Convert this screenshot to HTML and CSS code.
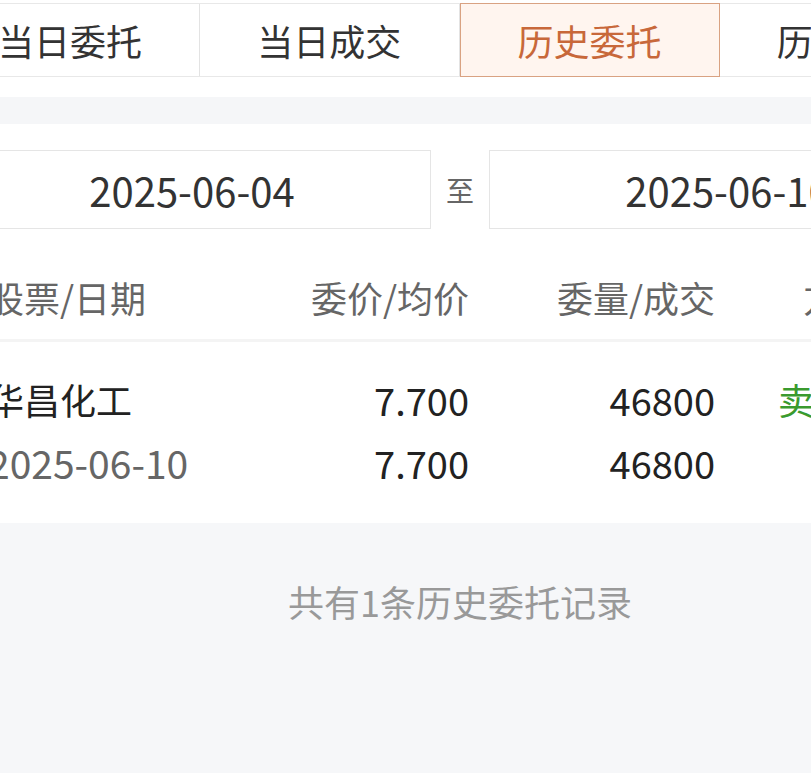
FILE: index.html
```html
<html>
<head>
    <meta charset="utf-8">
    <link rel="stylesheet" href="styles.css">
</head>

<body>
    <div class="page">
        <!-- Tabs -->
        <div class="tabs">
            <div class="tab">当日委托</div>
            <div class="tab">当日成交</div>
            <div class="tab active">历史委托</div>
            <div class="tab">历史成交</div>
        </div>

        <div class="gap"></div>

        <!-- Date range -->
        <div class="dates">
            <div class="date-box">2025-06-04</div>
            <div class="date-sep">至</div>
            <div class="date-box">2025-06-10</div>
        </div>

        <!-- Orders table -->
        <div class="table">
            <div class="row head">
                <div class="cell c1">股票/日期</div>
                <div class="cell c2">委价/均价</div>
                <div class="cell c3">委量/成交</div>
                <div class="cell c4 head-c4">方向/状态</div>
            </div>
            <div class="row item">
                <div class="cell c1">
                    <div class="name">华昌化工</div>
                    <div class="sub">2025-06-10</div>
                </div>
                <div class="cell c2 num">
                    <div>7.700</div>
                    <div>7.700</div>
                </div>
                <div class="cell c3 num">
                    <div>46800</div>
                    <div>46800</div>
                </div>
                <div class="cell c4">
                    <div class="sell">卖出</div>
                </div>
            </div>
        </div>

        <div class="footer">共有1条历史委托记录</div>
    </div>
</body>
</html>
```

FILE: styles.css
```css
html, body {
    margin: 0;
    padding: 0;
    background-color: #f6f7f9;
    overflow: hidden;
}

body {
    font-family: "Noto Sans CJK SC", "Noto Sans", sans-serif;
    color: #333;
}

.page {
    width: 1038px;
    margin-left: -59px;
    background-color: #fff;
    padding-top: 3px;
}

.tabs {
    display: flex;
    border-top: 1px solid #e8e8e8;
    border-bottom: 1px solid #e8e8e8;
    background-color: #fff;
}

.tab {
    flex: 1;
    height: 72px;
    display: flex;
    align-items: center;
    justify-content: center;
    font-size: 36px;
    color: #333;
    border-right: 1px solid #e3e3e3;
}

.tab.active {
    margin: -1px 0;
    height: 72px;
    border: 1px solid #d9a282;
    background-color: #fff5ef;
    color: #c8683a;
}

.gap {
    height: 27px;
    margin-top: 20px;
    background-color: #f5f6f8;
}

.dates {
    display: flex;
    align-items: center;
    padding: 26px 12px 0;
}

.date-box {
    flex: 1;
    height: 77px;
    border: 1px solid #e5e5e5;
    display: flex;
    align-items: center;
    justify-content: center;
    font-size: 40px;
    color: #333;
}

.date-sep {
    width: 58px;
    text-align: center;
    font-size: 28px;
    color: #666;
}

.table {
    padding: 0 0 0 47px;
}

.row {
    display: grid;
    grid-template-columns: 222px 259px 246px 1fr;
}

.head {
    padding: 46px 0 20px;
    line-height: 44px;
    border-bottom: 3px solid #f4f4f4;
    color: #666;
    font-size: 36px;
}

.c2, .c3 {
    text-align: right;
}

.c4 {
    padding-left: 63px;
}

.head-c4 {
    padding-left: 88px;
}

.item {
    padding: 26px 0 29px;
    font-size: 36px;
    line-height: 63px;
    color: #222;
}

.name {
    color: #222;
}

.sub {
    color: #666;
    font-size: 39px;
}

.num {
    font-size: 38px;
}

.sell {
    color: #3a9a2e;
}

.footer {
    background-color: #f6f7f9;
    padding-top: 52px;
    height: 200px;
    line-height: 52px;
    text-align: center;
    font-size: 36px;
    color: #999;
}
```
